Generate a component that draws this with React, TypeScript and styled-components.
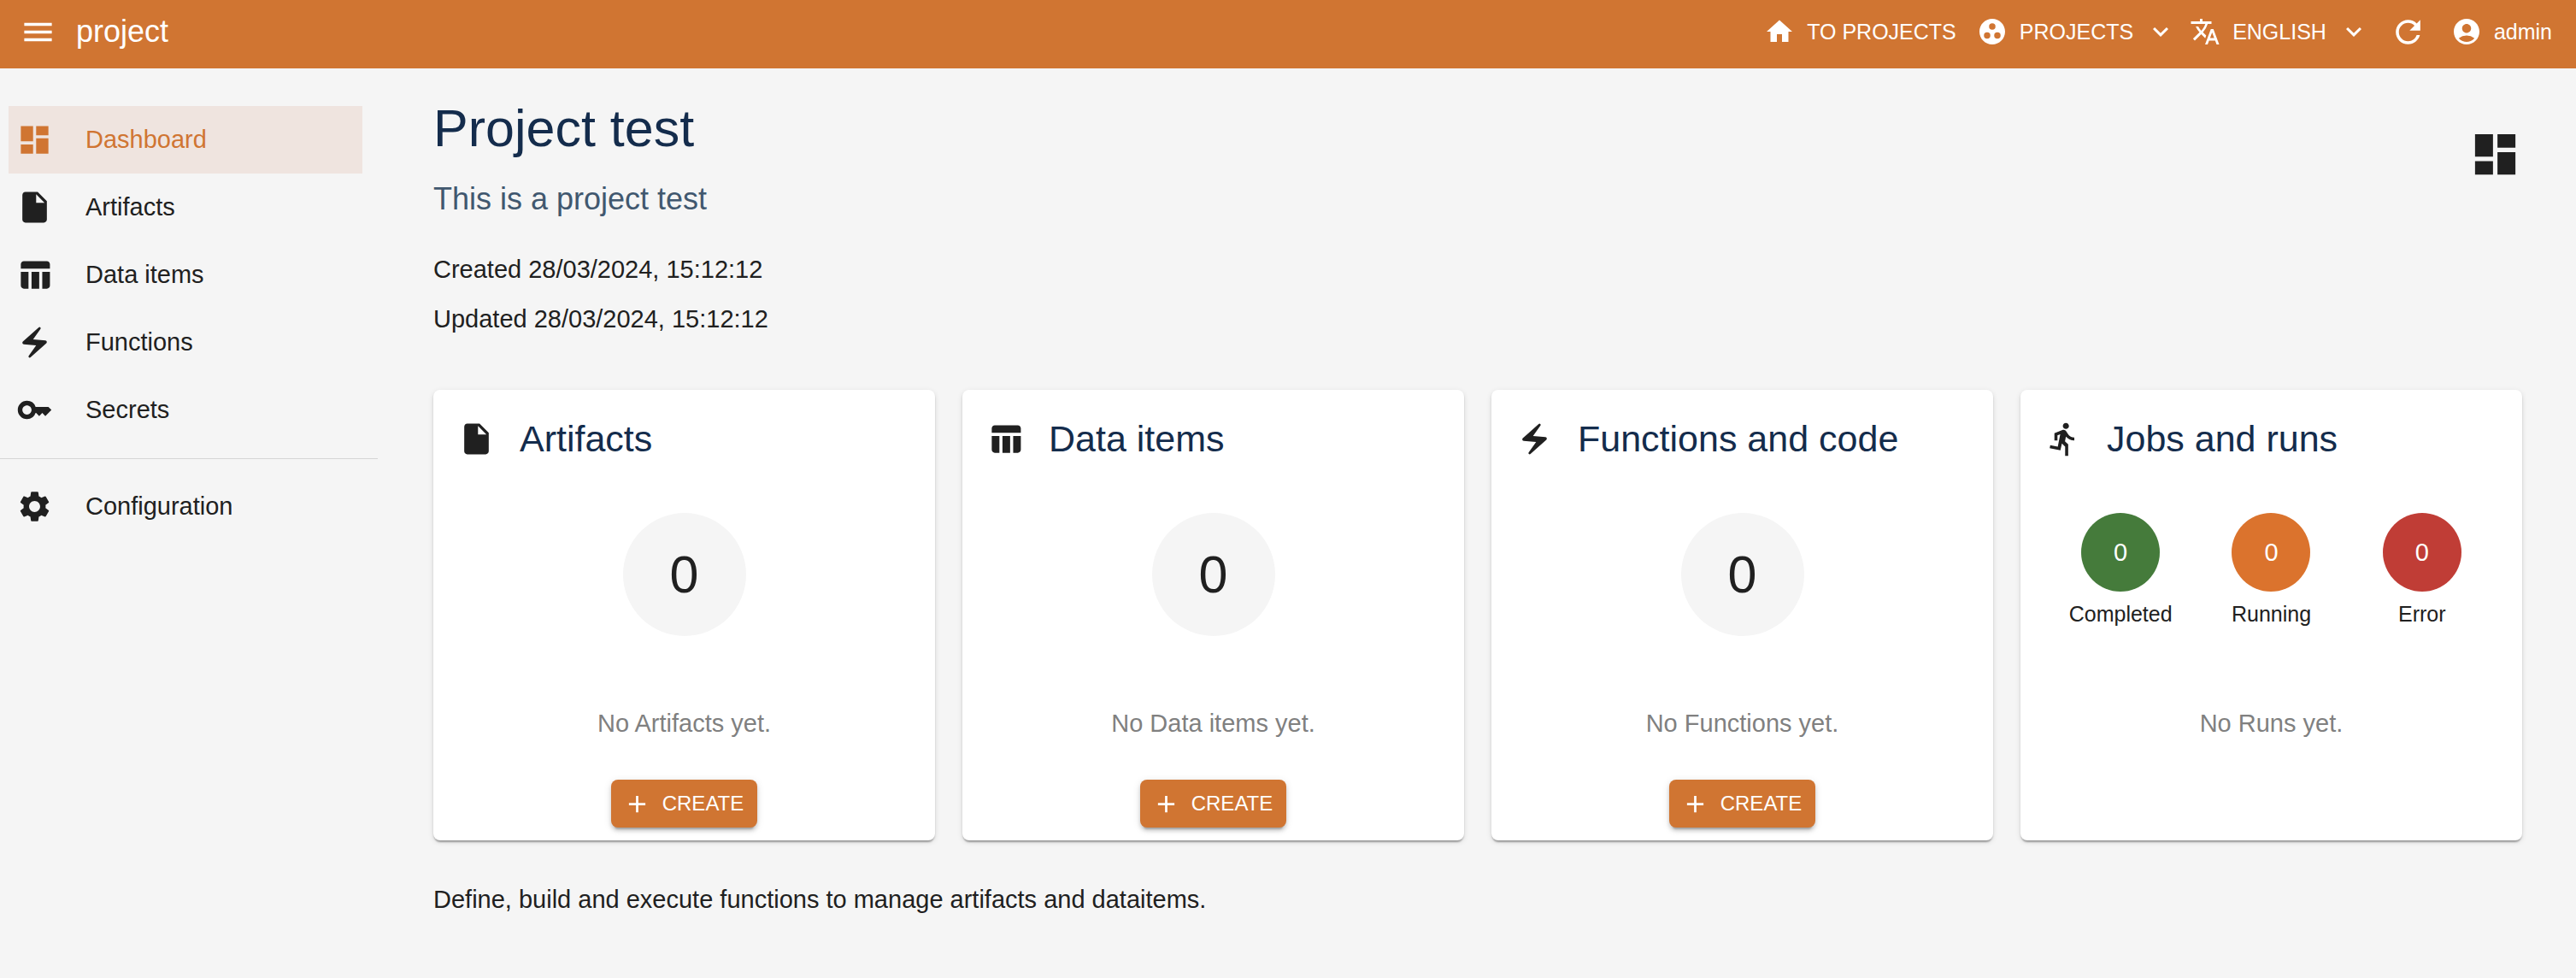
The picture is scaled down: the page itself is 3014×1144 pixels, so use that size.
import React from "react";
import styled, { createGlobalStyle } from "styled-components";
import type { IconType } from "react-icons";
import {
  MdAccountCircle,
  MdAdd,
  MdDashboard,
  MdDirectionsRun,
  MdElectricBolt,
  MdExpandMore,
  MdGroupWork,
  MdHome,
  MdInsertDriveFile,
  MdKey,
  MdMenu,
  MdRefresh,
  MdSettings,
  MdTableChart,
  MdTranslate,
} from "react-icons/md";

const color = {
  primary: "#d07532",
  selected: "#efe4df",
  page: "#f5f5f5",
  text: "#202020",
  heading: "#142c4c",
  subheading: "#41586f",
  muted: "#808080",
  divider: "#d5d5d5",
};

const GlobalStyle = createGlobalStyle`
  *, *::before, *::after { box-sizing: border-box; }
  body {
    margin: 0;
    background: ${color.page};
    color: ${color.text};
    font-family: "Liberation Sans", Arial, Helvetica, sans-serif;
    font-size: 29px;
  }
  h1, h2, p, ul { margin: 0; padding: 0; font-weight: 400; }
  svg { display: block; flex-shrink: 0; }
  button { font-family: inherit; border: 0; cursor: pointer; }
`;

const AppBar = styled.header`
  display: flex;
  align-items: center;
  justify-content: space-between;
  height: 80px;
  padding: 0 16px 6px;
  background: ${color.primary};
  color: #fff;
`;

const BarGroup = styled.div`
  display: flex;
  align-items: center;
  gap: 10px;
`;

const MenuGroup = styled.div`
  display: flex;
  gap: 2px;
`;

const BarTitle = styled.span`
  padding-left: 6px;
  font-size: 36px;
`;

const BarButton = styled.button<{ $wide?: boolean }>`
  display: flex;
  align-items: center;
  gap: 14px;
  padding: 0 ${(p) => (p.$wide ? 12 : 7)}px;
  background: none;
  color: inherit;
  font-size: 25px;
`;

const Layout = styled.div`
  display: flex;
`;

const Sidebar = styled.nav`
  flex: 0 0 442px;
  padding-top: 44px;
`;

const NavList = styled.ul`
  list-style: none;
  padding: 0 18px 0 10px;
`;

const NavLink = styled.a<{ $active?: boolean }>`
  display: flex;
  align-items: center;
  gap: 38px;
  height: 79px;
  padding-left: 9px;
  background: ${(p) => (p.$active ? color.selected : "transparent")};
  color: ${(p) => (p.$active ? color.primary : color.text)};
  text-decoration: none;
`;

const Divider = styled.hr`
  height: 1px;
  margin: 17px 0 16px;
  border: 0;
  background: ${color.divider};
`;

const Main = styled.main`
  flex: 1;
  min-width: 0;
  padding: 32px 63px 40px 65px;
`;

const PageHead = styled.div`
  display: flex;
  justify-content: space-between;
  margin-bottom: 54px;
`;

const PageIcon = styled.div`
  padding-top: 37px;
`;

const PageTitle = styled.h1`
  font-size: 61px;
  line-height: 76px;
  color: ${color.heading};
`;

const Subtitle = styled.p`
  margin: 16px 0 24px;
  font-size: 36px;
  line-height: 58px;
  color: ${color.subheading};
`;

const Line = styled.p`
  line-height: 58px;
`;

const Cards = styled.div`
  display: grid;
  grid-template-columns: repeat(4, 1fr);
  gap: 32px;
  margin-bottom: 40px;
`;

const Card = styled.section`
  display: flex;
  flex-direction: column;
  align-items: center;
  padding: 29px 29px 15px;
  border-radius: 8px;
  background: #fff;
  box-shadow: 0 4px 2px -2px rgba(0, 0, 0, 0.2), 0 2px 2px rgba(0, 0, 0, 0.14),
    0 2px 6px rgba(0, 0, 0, 0.12);
`;

const CardHead = styled.div`
  display: flex;
  align-items: center;
  align-self: stretch;
  gap: 29px;
  height: 57px;
  margin-bottom: 58px;
`;

const CardTitle = styled.h2`
  font-size: 43px;
  line-height: 57px;
  color: ${color.heading};
`;

const Stats = styled.div`
  display: grid;
  grid-auto-flow: column;
  grid-auto-columns: 1fr;
  justify-items: center;
  align-self: stretch;
  height: 144px;
  margin-bottom: 81px;
`;

const Stat = styled.div`
  display: flex;
  flex-direction: column;
  align-items: center;
  gap: 7px;
`;

const Count = styled.div<{ $fill?: string }>`
  display: grid;
  place-items: center;
  width: ${(p) => (p.$fill ? 92 : 144)}px;
  aspect-ratio: 1;
  border-radius: 50%;
  background: ${(p) => p.$fill ?? color.page};
  color: ${(p) => (p.$fill ? "#fff" : color.text)};
  font-size: ${(p) => (p.$fill ? 29 : 61)}px;
`;

const StatLabel = styled.span`
  font-size: 25px;
  line-height: 38px;
`;

const Empty = styled.p`
  margin-bottom: 44px;
  line-height: 43px;
  color: ${color.muted};
`;

const CreateButton = styled.button`
  display: flex;
  align-items: center;
  gap: 13px;
  height: 56px;
  padding: 0 16px 0 14px;
  border-radius: 8px;
  background: ${color.primary};
  color: #fff;
  font-size: 24px;
  box-shadow: 0 6px 2px -4px rgba(0, 0, 0, 0.2), 0 4px 4px rgba(0, 0, 0, 0.14),
    0 2px 10px rgba(0, 0, 0, 0.12);
`;

const resources: { label: string; icon: IconType }[] = [
  { label: "Dashboard", icon: MdDashboard },
  { label: "Artifacts", icon: MdInsertDriveFile },
  { label: "Data items", icon: MdTableChart },
  { label: "Functions", icon: MdElectricBolt },
  { label: "Secrets", icon: MdKey },
];

const summaries: { title: string; empty: string; icon: IconType }[] = [
  { title: "Artifacts", empty: "No Artifacts yet.", icon: MdInsertDriveFile },
  { title: "Data items", empty: "No Data items yet.", icon: MdTableChart },
  { title: "Functions and code", empty: "No Functions yet.", icon: MdElectricBolt },
];

const runStates = [
  { label: "Completed", fill: "#457b3b" },
  { label: "Running", fill: "#db732d" },
  { label: "Error", fill: "#c03d36" },
];

function NavItem({ label, icon: Icon, active }: { label: string; icon: IconType; active?: boolean }) {
  return (
    <li>
      <NavLink href="#" $active={active} aria-current={active ? "page" : undefined}>
        <Icon size={43} />
        {label}
      </NavLink>
    </li>
  );
}

export default function App() {
  return (
    <>
      <GlobalStyle />
      <AppBar>
        <BarGroup>
          <BarButton aria-label="Toggle menu">
            <MdMenu size={43} />
          </BarButton>
          <BarTitle>project</BarTitle>
        </BarGroup>
        <BarGroup>
          <BarButton>
            <MdHome size={36} />
            TO PROJECTS
          </BarButton>
          <MenuGroup>
            <BarButton aria-haspopup="menu">
              <MdGroupWork size={36} />
              PROJECTS
              <MdExpandMore size={36} />
            </BarButton>
            <BarButton aria-haspopup="menu">
              <MdTranslate size={36} />
              ENGLISH
              <MdExpandMore size={36} />
            </BarButton>
          </MenuGroup>
          <BarButton aria-label="Refresh">
            <MdRefresh size={43} />
          </BarButton>
          <BarButton $wide aria-haspopup="menu">
            <MdAccountCircle size={36} />
            admin
          </BarButton>
        </BarGroup>
      </AppBar>
      <Layout>
        <Sidebar>
          <NavList>
            {resources.map((r, i) => (
              <NavItem key={r.label} {...r} active={i === 0} />
            ))}
          </NavList>
          <Divider />
          <NavList>
            <NavItem label="Configuration" icon={MdSettings} />
          </NavList>
        </Sidebar>
        <Main>
          <PageHead>
            <div>
              <PageTitle>Project test</PageTitle>
              <Subtitle>This is a project test</Subtitle>
              <Line>Created 28/03/2024, 15:12:12</Line>
              <Line>Updated 28/03/2024, 15:12:12</Line>
            </div>
            <PageIcon>
              <MdDashboard size={63} />
            </PageIcon>
          </PageHead>
          <Cards>
            {summaries.map(({ title, empty, icon: Icon }) => (
              <Card key={title}>
                <CardHead>
                  <Icon size={43} />
                  <CardTitle>{title}</CardTitle>
                </CardHead>
                <Stats>
                  <Count>0</Count>
                </Stats>
                <Empty>{empty}</Empty>
                <CreateButton>
                  <MdAdd size={33} />
                  CREATE
                </CreateButton>
              </Card>
            ))}
            <Card>
              <CardHead>
                <MdDirectionsRun size={43} />
                <CardTitle>Jobs and runs</CardTitle>
              </CardHead>
              <Stats>
                {runStates.map((s) => (
                  <Stat key={s.label}>
                    <Count $fill={s.fill}>0</Count>
                    <StatLabel>{s.label}</StatLabel>
                  </Stat>
                ))}
              </Stats>
              <Empty>No Runs yet.</Empty>
            </Card>
          </Cards>
          <Line>Define, build and execute functions to manage artifacts and dataitems.</Line>
        </Main>
      </Layout>
    </>
  );
}
